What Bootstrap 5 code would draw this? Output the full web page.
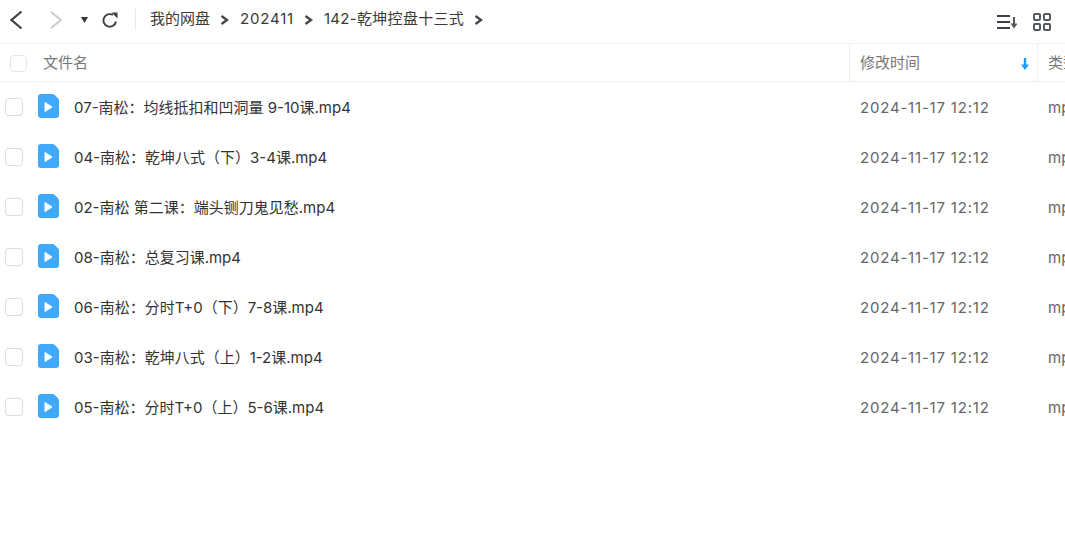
<!DOCTYPE html>
<html lang="zh-CN">
<head>
  <meta charset="UTF-8" />
  <meta name="viewport" content="width=device-width, initial-scale=1" />
  <title>我的网盘</title>
  <link href="https://cdn.jsdelivr.net/npm/bootstrap@5.3.0/dist/css/bootstrap.min.css" rel="stylesheet">
  <style>
    html, body { height: 100%; overflow: hidden; }
    body { font-family: Inter, "Noto Sans CJK SC", sans-serif; font-size: 15px; color: #3b3b3b; background: #fff; }
    .tool-bar { height: 44px; border-bottom: 1px solid #f3f3f3; padding-left: 8px; padding-right: 14px; padding-bottom: 4px; }
    .tool-btn { display: block; flex: none; }
    .nav-next { margin-left: 25px; }
    .nav-drop { margin-left: 18px; }
    .nav-refresh { margin-left: 14px; }
    .tool-sep { width: 1px; height: 21px; background: #e8e8e8; margin-left: 17px; margin-right: 14px; }
    .crumb-text { color: #3a3a3a; white-space: nowrap; }
    .crumb-num { letter-spacing: .8px; }
    .crumb-long { letter-spacing: .3px; }
    .crumb-arrow { margin-left: 10px; margin-right: 11px; flex: none; }
    .view-btns { margin-top: 4px; }
    .head-row { height: 38px; border-bottom: 1px solid #f0f0f0; color: #777; padding-top: 0; }
    .head-text { padding-top: 2px; }
    .file-row { height: 50px; }
    .col-name { width: 849px; flex: none; }
    .col-time { width: 188px; flex: none; padding-left: 10px; }
    .col-kind { flex: none; width: 60px; padding-left: 10px; white-space: nowrap; }
    .file-row .col-time, .file-row .col-kind { padding-left: 11px; padding-top: 2px; }
    .head-row .col-time, .head-row .col-kind { height: 100%; border-left: 1px solid #efefef; }
    .head-row .col-time { padding-right: 8px; }
    .head-check { width: 17px; height: 17px; margin-left: 10px; margin-right: 16px; margin-top: 1px; border: 1px solid #e2e4e8; border-radius: 4px; flex: none; }
    .row-check { width: 18px; height: 18px; margin-left: 5px; margin-right: 15px; border: 1px solid #d9dce1; border-radius: 4px; flex: none; }
    .file-icon { flex: none; margin-right: 15px; margin-bottom: 2px; }
    .file-name { color: #333; white-space: nowrap; padding-top: 2px; }
    .time-text, .kind-text { color: #666; white-space: nowrap; }
    .time-text { letter-spacing: .8px; }
  </style>
</head>
<body>

  <!-- toolbar -->
  <div class="tool-bar d-flex align-items-center">
    <svg class="tool-btn" width="16" height="20" viewBox="0 0 16 20"><path d="M13.5 1.5 3.5 10l10 8.5" fill="none" stroke="#3c3f45" stroke-width="2.2"/></svg>
    <svg class="tool-btn nav-next" width="14" height="20" viewBox="0 0 14 20"><path d="M2 2l10 8-10 8" fill="none" stroke="#c9c9c9" stroke-width="1.8"/></svg>
    <svg class="tool-btn nav-drop" width="7" height="6" viewBox="0 0 7 6"><path d="M0 0h7L3.500 6z" fill="#33363b"/></svg>
    <svg class="tool-btn nav-refresh" width="16" height="16" viewBox="0 0 16 16"><path d="M14 9.500A6.300 6.300 0 1 1 11 3" fill="none" stroke="#3c3f45" stroke-width="1.900"/><path d="M9.500 0.500h6v6z" fill="#3c3f45"/></svg>
    <div class="tool-sep"></div>
    <span class="crumb-text">我的网盘</span>
    <svg class="crumb-arrow" width="9" height="10" viewBox="0 0 9 10"><path d="M1.500 1 7 5 1.500 9" fill="none" stroke="#44474d" stroke-width="2.400"/></svg>
    <span class="crumb-text crumb-num">202411</span>
    <svg class="crumb-arrow" width="9" height="10" viewBox="0 0 9 10"><path d="M1.500 1 7 5 1.500 9" fill="none" stroke="#44474d" stroke-width="2.400"/></svg>
    <span class="crumb-text crumb-long">142-乾坤控盘十三式</span>
    <svg class="crumb-arrow" width="9" height="10" viewBox="0 0 9 10"><path d="M1.500 1 7 5 1.500 9" fill="none" stroke="#44474d" stroke-width="2.400"/></svg>
    <div class="view-btns d-flex align-items-center gap-3 ms-auto">
      <svg class="tool-btn" width="20" height="16" viewBox="0 0 20 16"><path d="M0 2h13M0 8h13M0 14h13" stroke="#3c3f45" stroke-width="2"/><path d="M17 3v8" stroke="#55585e" stroke-width="2"/><path d="M13.500 9.500h7L17 14.500z" fill="#55585e"/></svg>
      <svg class="tool-btn" width="18" height="18" viewBox="0 0 18 18"><g fill="none" stroke="#555960" stroke-width="2"><rect x="1" y="1" width="6" height="6" rx="1"/><rect x="11" y="1" width="6" height="6" rx="1"/><rect x="1" y="11" width="6" height="6" rx="1"/><rect x="11" y="11" width="6" height="6" rx="1"/></g></svg>
    </div>
  </div>

  <!-- column headers -->
  <div class="head-row d-flex align-items-center">
    <div class="col-name d-flex align-items-center">
      <span class="head-check"></span>
      <span class="head-text">文件名</span>
    </div>
    <div class="col-time d-flex align-items-center justify-content-between">
      <span class="head-text">修改时间</span>
      <svg class="head-text" width="8" height="14" viewBox="0 0 8 12"><path d="M4 0v7" stroke="#1e9bf5" stroke-width="2.400"/><path d="M0 6.500h8L4 12z" fill="#1e9bf5"/></svg>
    </div>
    <div class="col-kind d-flex align-items-center"><span class="head-text">类型</span></div>
  </div>

  <!-- files, filled by JS -->
  <div id="fileList"></div>

  <script src="https://cdn.jsdelivr.net/npm/bootstrap@5.3.0/dist/js/bootstrap.bundle.min.js"></script>
  <script>
    const files = [
      '07-南松：均线抵扣和凹洞量 9-10课.mp4',
      '04-南松：乾坤八式（下）3-4课.mp4',
      '02-南松 第二课：端头铡刀鬼见愁.mp4',
      '08-南松：总复习课.mp4',
      '06-南松：分时T+0（下）7-8课.mp4',
      '03-南松：乾坤八式（上）1-2课.mp4',
      '05-南松：分时T+0（上）5-6课.mp4'
    ];

    const list = document.getElementById('fileList');
    files.forEach(name => {
      const row = document.createElement('div');
      row.className = 'file-row d-flex align-items-center';
      row.innerHTML = `
        <div class="col-name d-flex align-items-center">
          <span class="row-check"></span>
          <svg class="file-icon" width="21" height="24" viewBox="0 0 21 24">
            <path d="M3 0h11.500q1.200 0 2 .8L20.200 4.600q.8.8.8 2V21a3 3 0 0 1-3 3H3a3 3 0 0 1-3-3V3a3 3 0 0 1 3-3z" fill="#3fa9fb"/>
            <path d="M7 8.500l7 4.500-7 4.500z" fill="#fff" stroke="#fff" stroke-linejoin="round"/>
          </svg>
          <span class="file-name">${name}</span>
        </div>
        <div class="col-time time-text">2024-11-17 12:12</div>
        <div class="col-kind kind-text">mp4</div>
      `;
      list.appendChild(row);
    });
  </script>
</body>
</html>
